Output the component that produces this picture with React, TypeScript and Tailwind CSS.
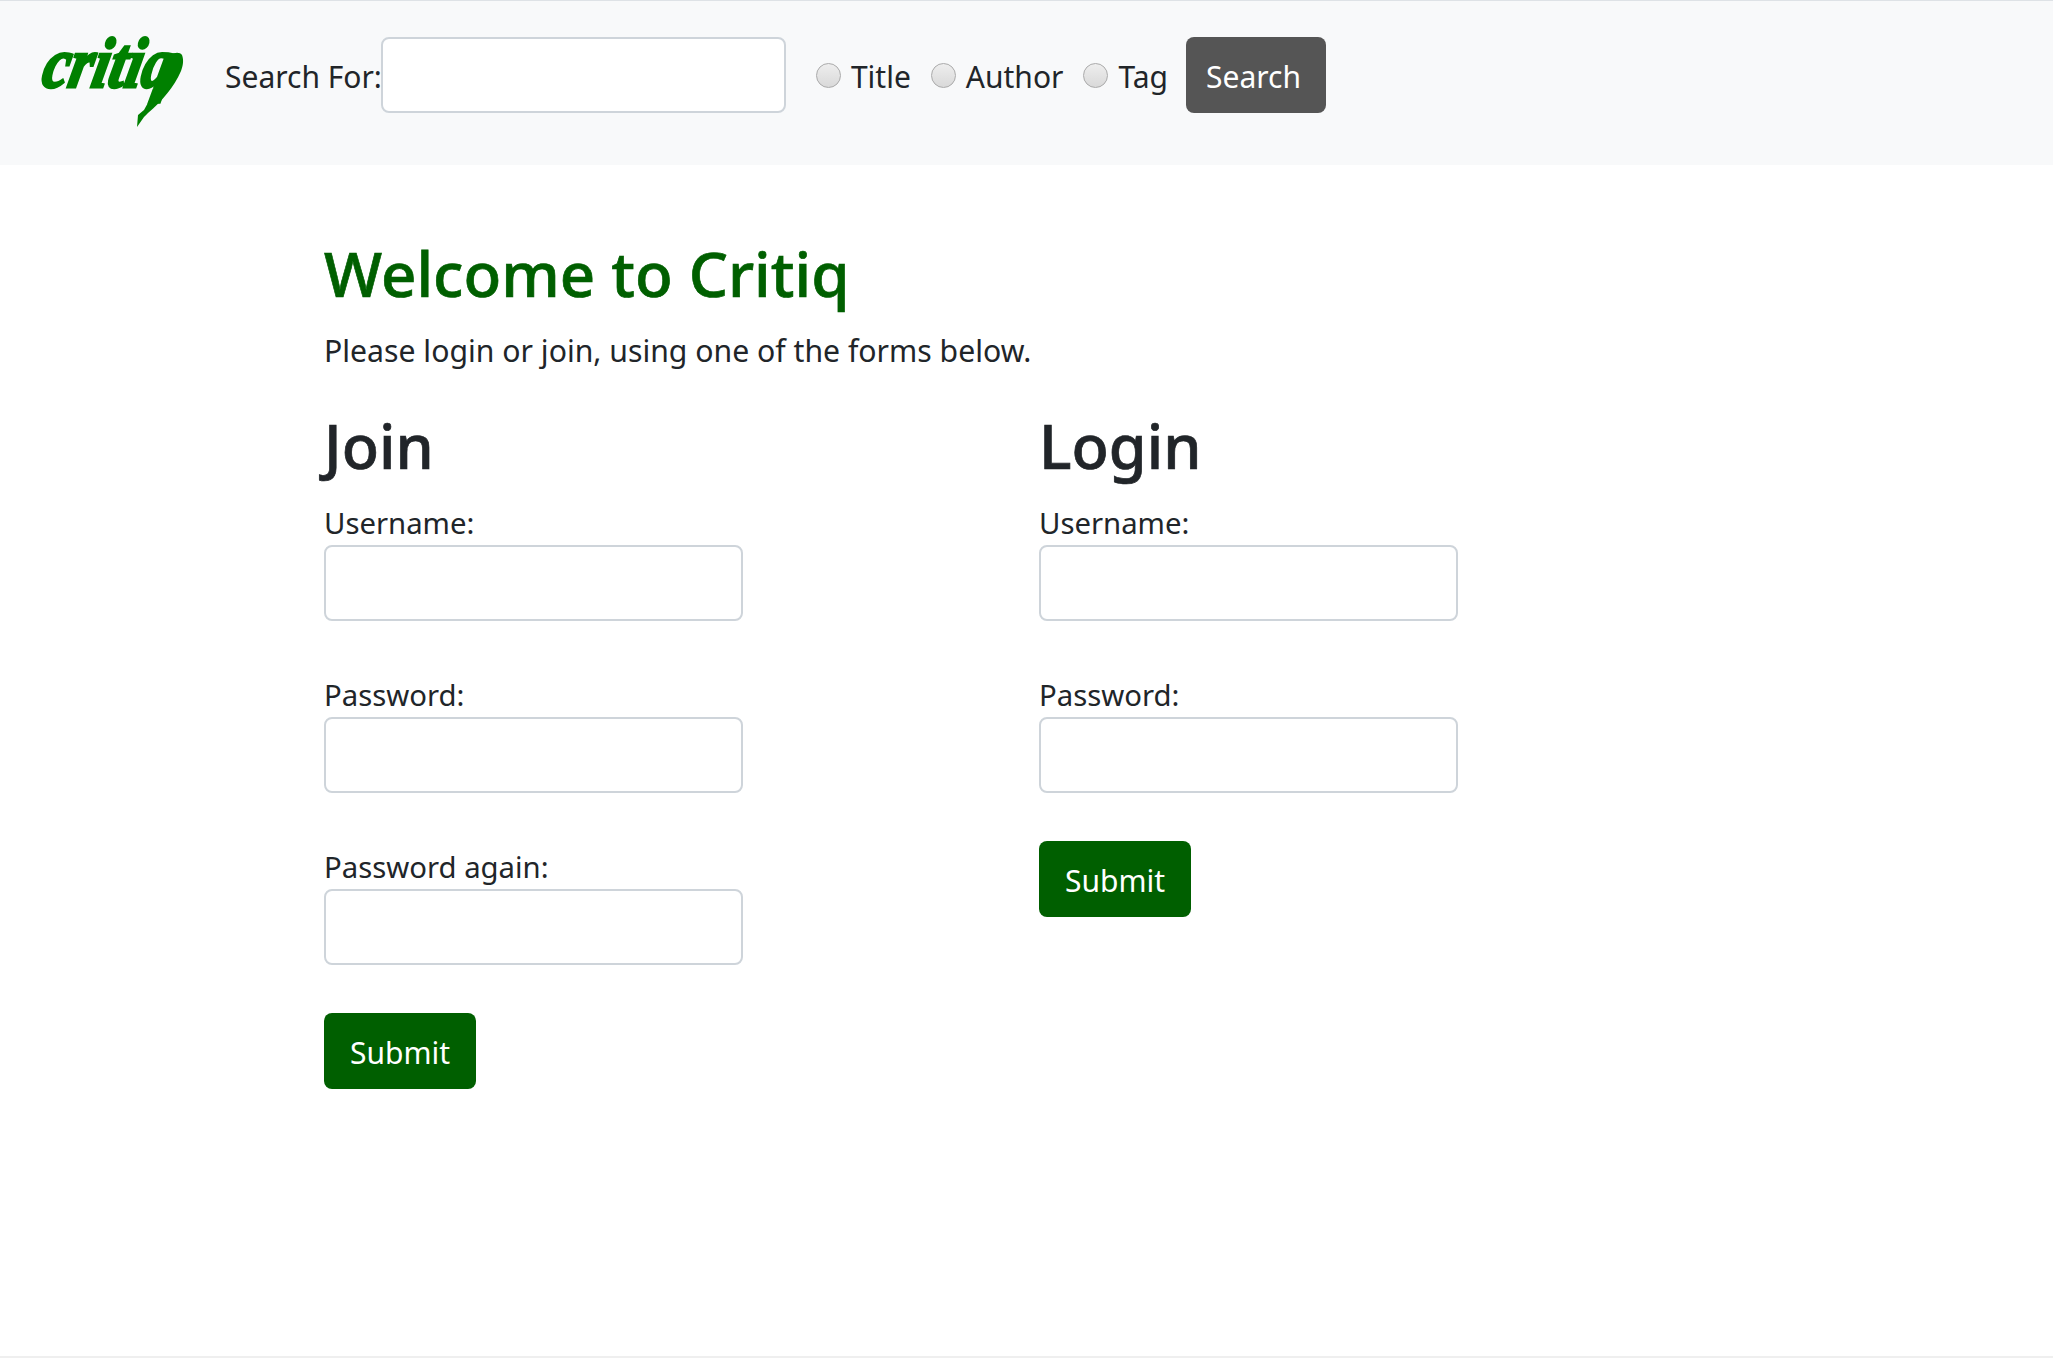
const font = "font-['Noto_Sans','Open_Sans',sans-serif]";

function Logo() {
  return (
    <svg width="170" height="125" viewBox="0 -25 170 125" className="block shrink-0">
      <text
        transform="translate(0 50) skewX(-12) scale(0.9 1.08)"
        fill="#008000"
        stroke="#008000"
        strokeWidth="2.8"
        fontFamily="'Liberation Serif', serif"
        fontStyle="italic"
        fontWeight="700"
        fontSize="66"
      >
        critiq
      </text>
      <path
        d="M130 18c5-3 10-3 12 0 2 5 1 11-1 16-7 16-19 30-33 42l-3 3-1 1-7 10 1-12 6-5c5-9 10-18 13-28l3-9c1-6 3-12 10-18z"
        fill="#008000"
      />
    </svg>
  );
}

function Radio({ label }: { label: string }) {
  return (
    <label className="flex items-center">
      <span className="size-[25px] rounded-full border border-[#aaaaaa] bg-gradient-to-b from-[#eeeeee] to-[#d9d9d9]" />
      <span className="ml-[10px] pt-[2px] text-[30px]">{label}</span>
    </label>
  );
}

function Field({ label }: { label: string }) {
  return (
    <div className="mb-12">
      <label className="block h-12 text-[29.3px] leading-[52px]">{label}</label>
      <input className="block h-[76px] w-[419px] rounded-lg border-2 border-[#ced4da] bg-white" />
    </div>
  );
}

function SubmitButton() {
  return (
    <button className="h-[76px] w-[152px] rounded-lg bg-[#005f00] pt-[2px] text-[30px] text-white">
      Submit
    </button>
  );
}

export default function App() {
  return (
    <div className={`${font} min-h-[1358px] border-b-2 border-[#efefef] bg-white text-[#212529]`}>
      <nav className="flex h-[165px] items-start border-t border-[#dee2e6] bg-[#f8f9fa] pt-[36px]">
        <div className="-mt-[25px] ml-[40px] mr-[15px]">
          <Logo />
        </div>
        <div className="flex h-[76px] items-center">
          <span className="-mr-px pt-[2px] text-[30px]">Search For:</span>
          <input className="h-[76px] w-[405px] rounded-lg border-2 border-[#ced4da] bg-white" />
          <div className="ml-[30px] flex gap-[20px]">
            <Radio label="Title" />
            <Radio label="Author" />
            <Radio label="Tag" />
          </div>
          <button className="ml-[18px] h-[76px] w-[140px] rounded-lg bg-[#555555] pr-[5px] pt-[2px] text-[30px] text-white">
            Search
          </button>
        </div>
      </nav>
      <main className="pl-[324px] pt-[71px]">
        <h1 className="text-[61.8px] leading-[74px] font-medium text-[#005f00] [-webkit-text-stroke:0.7px_#005f00]">
          Welcome to Critiq
        </h1>
        <p className="mt-[17px] text-[30.2px] leading-[48px]">Please login or join, using one of the forms below.</p>
        <div className="mt-[33px] flex">
          <section className="w-[715px]">
            <h2 className="mb-[13px] text-[61px] leading-[76px] font-medium [-webkit-text-stroke:0.7px_#212529]">Join</h2>
            <Field label="Username:" />
            <Field label="Password:" />
            <Field label="Password again:" />
            <SubmitButton />
          </section>
          <section>
            <h2 className="mb-[13px] text-[61px] leading-[76px] font-medium [-webkit-text-stroke:0.7px_#212529]">Login</h2>
            <Field label="Username:" />
            <Field label="Password:" />
            <SubmitButton />
          </section>
        </div>
      </main>
    </div>
  );
}
